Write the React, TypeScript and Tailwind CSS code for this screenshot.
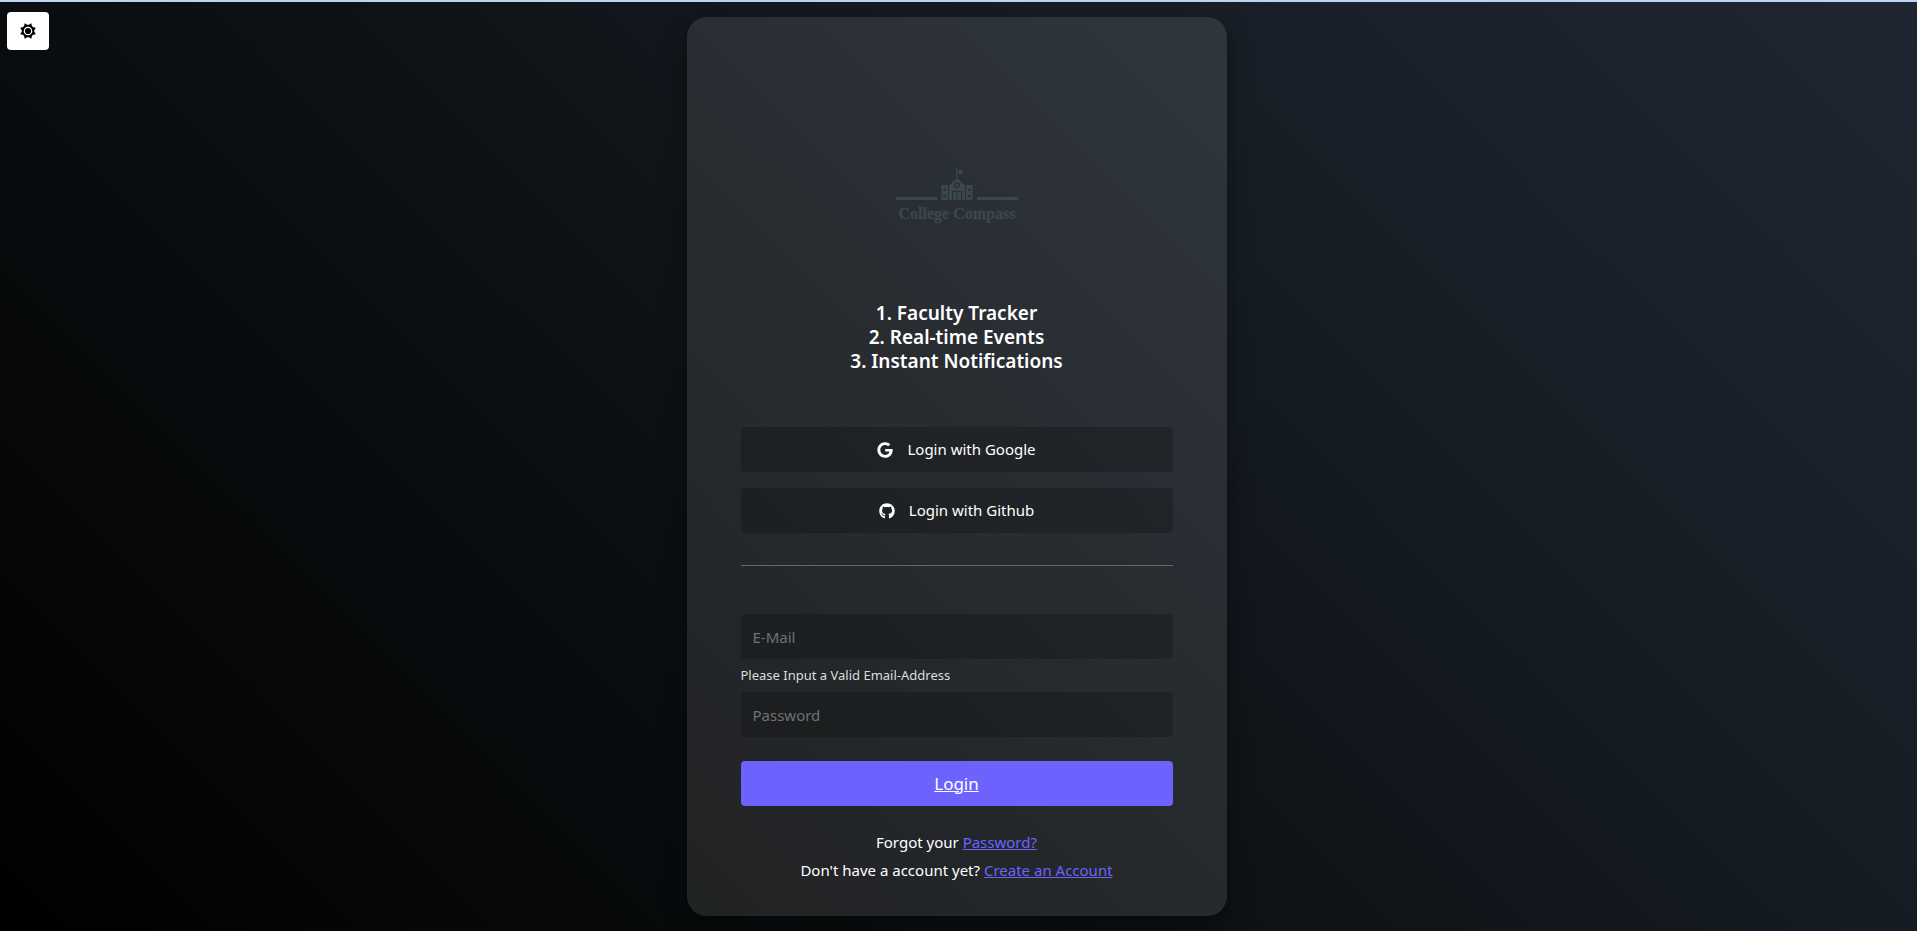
import { useState } from "react";
import { FaGithub, FaGoogle } from "react-icons/fa";

function GearIcon() {
  return (
    <svg viewBox="0 0 16 16" className="size-4" aria-hidden="true">
      <g fill="currentColor">
        <circle cx="8" cy="8" r="6.2" />
        <path d="M4.6 0.2 8 2.2 11.4 0.2 12 3.9 15.8 4.7 13.8 8 15.8 11.3 12 12.1 11.4 15.8 8 13.8 4.6 15.8 4 12.1 0.2 11.3 2.2 8 0.2 4.7 4 3.9Z" />
      </g>
      <circle cx="8" cy="8" r="3.7" fill="none" stroke="#fff" strokeWidth="1.2" />
    </svg>
  );
}

function Logo() {
  return (
    <svg viewBox="0 0 124 54" className="h-[54px] w-[124px] text-[#3b4650]" role="img" aria-label="College Compass">
      <g fill="currentColor">
        <path d="M1 28h41v3H1zM82 28h41v3H82z" />
        <path d="M61 0h1.5v8H61zM63.5 1H67.500v4H63.500z" />
        <path
          fillRule="evenodd"
          d="M54 31V16.500L62 9l8 7.500V31h-3v-9H57v9zM62 13a3 3 0 1 0 0 6 3 3 0 0 0 0-6zM62 14.300a1.700 1.700 0 1 1 0 3.400 1.700 1.700 0 0 1 0-3.400z"
        />
        <path d="M58 23h3.500v8H58zM62.500 23H66v8h-3.500z" />
        <path
          fillRule="evenodd"
          d="M46.500 16H53v15h-6.500zM48.500 19.500v2.500h2.500v-2.500zM48.500 25.500v2.500h2.500v-2.500zM71 16h6.500v15H71zM73 19.500v2.500h2.500v-2.500zM73 25.500v2.500h2.500v-2.500z"
        />
      </g>
      <path d="M53 44h6" stroke="currentColor" strokeWidth="0.6" />
      <text
        x="62"
        y="50"
        textAnchor="middle"
        fill="currentColor"
        stroke="currentColor"
        strokeWidth="0.3"
        className="font-['Liberation_Serif',serif] text-[16px] font-bold"
      >
        College Compass
      </text>
    </svg>
  );
}

const features = ["1. Faculty Tracker", "2. Real-time Events", "3. Instant Notifications"];

const providers = [
  { label: "Login with Google", Icon: FaGoogle },
  { label: "Login with Github", Icon: FaGithub },
];

const fieldClass =
  "h-[45px] w-full rounded-[4px] bg-black/20 px-3 text-[15px] text-white outline-none placeholder:text-[#6f7275]";

export default function App() {
  const [email, setEmail] = useState("");
  const [password, setPassword] = useState("");

  return (
    <div className="relative flex min-h-screen flex-col items-center border-t-2 border-[#bcd3f2] bg-[linear-gradient(45deg,#000000_0%,#0c1013_40%,#161d25_70%,#1f2631_100%)] bg-no-repeat py-[15px] pr-5 pl-4 font-['Noto_Sans',sans-serif] text-[15px] text-white">
      <button
        type="button"
        aria-label="Toggle theme"
        className="absolute top-[10px] left-[7px] flex h-[38px] w-[42px] items-center justify-center rounded-[4px] bg-white text-black"
      >
        <GearIcon />
      </button>

      <main className="flex w-full max-w-[540px] flex-col items-center rounded-[20px] bg-white/10 px-[54px] pb-8 shadow-[0_8px_24px_rgba(0,0,0,0.4)]">
        <div className="pt-[152px]">
          <Logo />
        </div>

        <h1 className="mt-[78px] text-center text-[19px] leading-6 font-semibold">
          {features.map((feature) => (
            <span key={feature} className="block">
              {feature}
            </span>
          ))}
        </h1>

        <div className="mt-[54px] flex w-full flex-col gap-4">
          {providers.map(({ label, Icon }) => (
            <button
              key={label}
              type="button"
              className="flex h-[45px] w-full items-center justify-center gap-[14px] rounded-[4px] bg-black/20"
            >
              <Icon className="size-4" aria-hidden="true" />
              {label}
            </button>
          ))}
        </div>

        <hr className="mt-8 w-full border-t border-[#66696b]" />

        <form className="mt-12 w-full" onSubmit={(event) => event.preventDefault()}>
          <input
            type="email"
            aria-label="E-Mail"
            aria-describedby="email-hint"
            placeholder="E-Mail"
            value={email}
            onChange={(event) => setEmail(event.target.value)}
            className={fieldClass}
          />
          <p id="email-hint" className="py-1 text-[13px] leading-[25px] text-[#dcdddd]">
            Please Input a Valid Email-Address
          </p>
          <input
            type="password"
            aria-label="Password"
            placeholder="Password"
            value={password}
            onChange={(event) => setPassword(event.target.value)}
            className={fieldClass}
          />
          <button
            type="submit"
            className="mt-6 flex h-[45px] w-full items-center justify-center rounded-[4px] bg-[#6c63ff] text-[17px] underline"
          >
            Login
          </button>
        </form>

        <div className="mt-[22px] text-center leading-7">
          <p>
            Forgot your{" "}
            <a href="#password" className="text-[#6c63ff] underline">
              Password?
            </a>
          </p>
          <p>
            Don't have a account yet?{" "}
            <a href="#register" className="text-[#6c63ff] underline">
              Create an Account
            </a>
          </p>
        </div>
      </main>
    </div>
  );
}
